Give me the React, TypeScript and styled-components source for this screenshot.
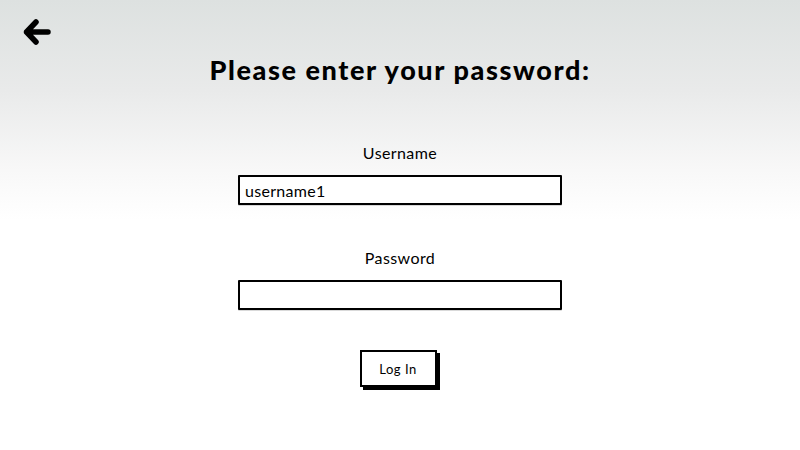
import React from "react";
import styled, { createGlobalStyle } from "styled-components";

const Global = createGlobalStyle`
  html, body { margin: 0; padding: 0; }
  body { font-family: "Lato", "DejaVu Sans", sans-serif; color: #000; }
`;

const Page = styled.div`
  width: 800px;
  height: 450px;
  box-sizing: border-box;
  background: linear-gradient(to bottom, #dde1e0 0px, #e9eaea 90px, #f8f8f8 170px, #ffffff 220px, #ffffff 100%);
  display: flex;
  flex-direction: column;
  align-items: center;
  position: relative;
  overflow: hidden;
`;

const BackButton = styled.button`
  position: absolute;
  left: 22px;
  top: 17px;
  width: 30px;
  height: 30px;
  padding: 0;
  border: none;
  background: transparent;
  display: block;
`;

const Title = styled.h1`
  margin: 53px 0 0 0;
  font-family: "Lato", sans-serif;
  font-weight: 900;
  font-size: 27px;
  letter-spacing: 1.6px;
  line-height: 34px;
`;

const Form = styled.div`
  margin-top: 57px;
  display: flex;
  flex-direction: column;
  align-items: center;
`;

const Field = styled.div`
  display: flex;
  flex-direction: column;
  align-items: center;
  gap: 13px;
  margin-bottom: 44px;
  &:last-of-type { margin-bottom: 40px; }
`;

const Label = styled.label`
  font-family: "Lato", sans-serif;
  font-size: 16px;
  letter-spacing: 0.4px;
  line-height: 18px;
`;

const Input = styled.input`
  width: 324px;
  height: 30px;
  box-sizing: border-box;
  border: 2px solid #000;
  border-radius: 1px;
  background: #fff;
  padding: 0 5px;
  font-family: "Lato", sans-serif;
  font-size: 16px;
  letter-spacing: 0.3px;
  color: #000;
  outline: none;
  box-shadow: 0 1px 0 rgba(0,0,0,0.15);
`;

const LoginButton = styled.button`
  width: 77px;
  height: 37px;
  margin-right: 4px;
  box-sizing: border-box;
  border: 2px solid #000;
  background: #fff;
  box-shadow: 3px 3px 0 #000;
  font-family: "Lato", sans-serif;
  font-size: 13px;
  letter-spacing: 0.5px;
  color: #000;
  padding: 0;
`;

export default function App() {
  return (
    <>
      <Global />
      <Page>
        <BackButton aria-label="Back">
          <svg width="30" height="30" viewBox="0 0 30 30">
            <path
              d="M14 5 L4.5 15 L14 25 M4.5 15 L26 15"
              fill="none"
              stroke="#000"
              strokeWidth="5.5"
              strokeLinecap="round"
              strokeLinejoin="round"
            />
          </svg>
        </BackButton>
        <Title>Please enter your password:</Title>
        <Form>
          <Field>
            <Label>Username</Label>
            <Input defaultValue="username1" />
          </Field>
          <Field>
            <Label>Password</Label>
            <Input type="password" />
          </Field>
          <LoginButton>Log In</LoginButton>
        </Form>
      </Page>
    </>
  );
}
